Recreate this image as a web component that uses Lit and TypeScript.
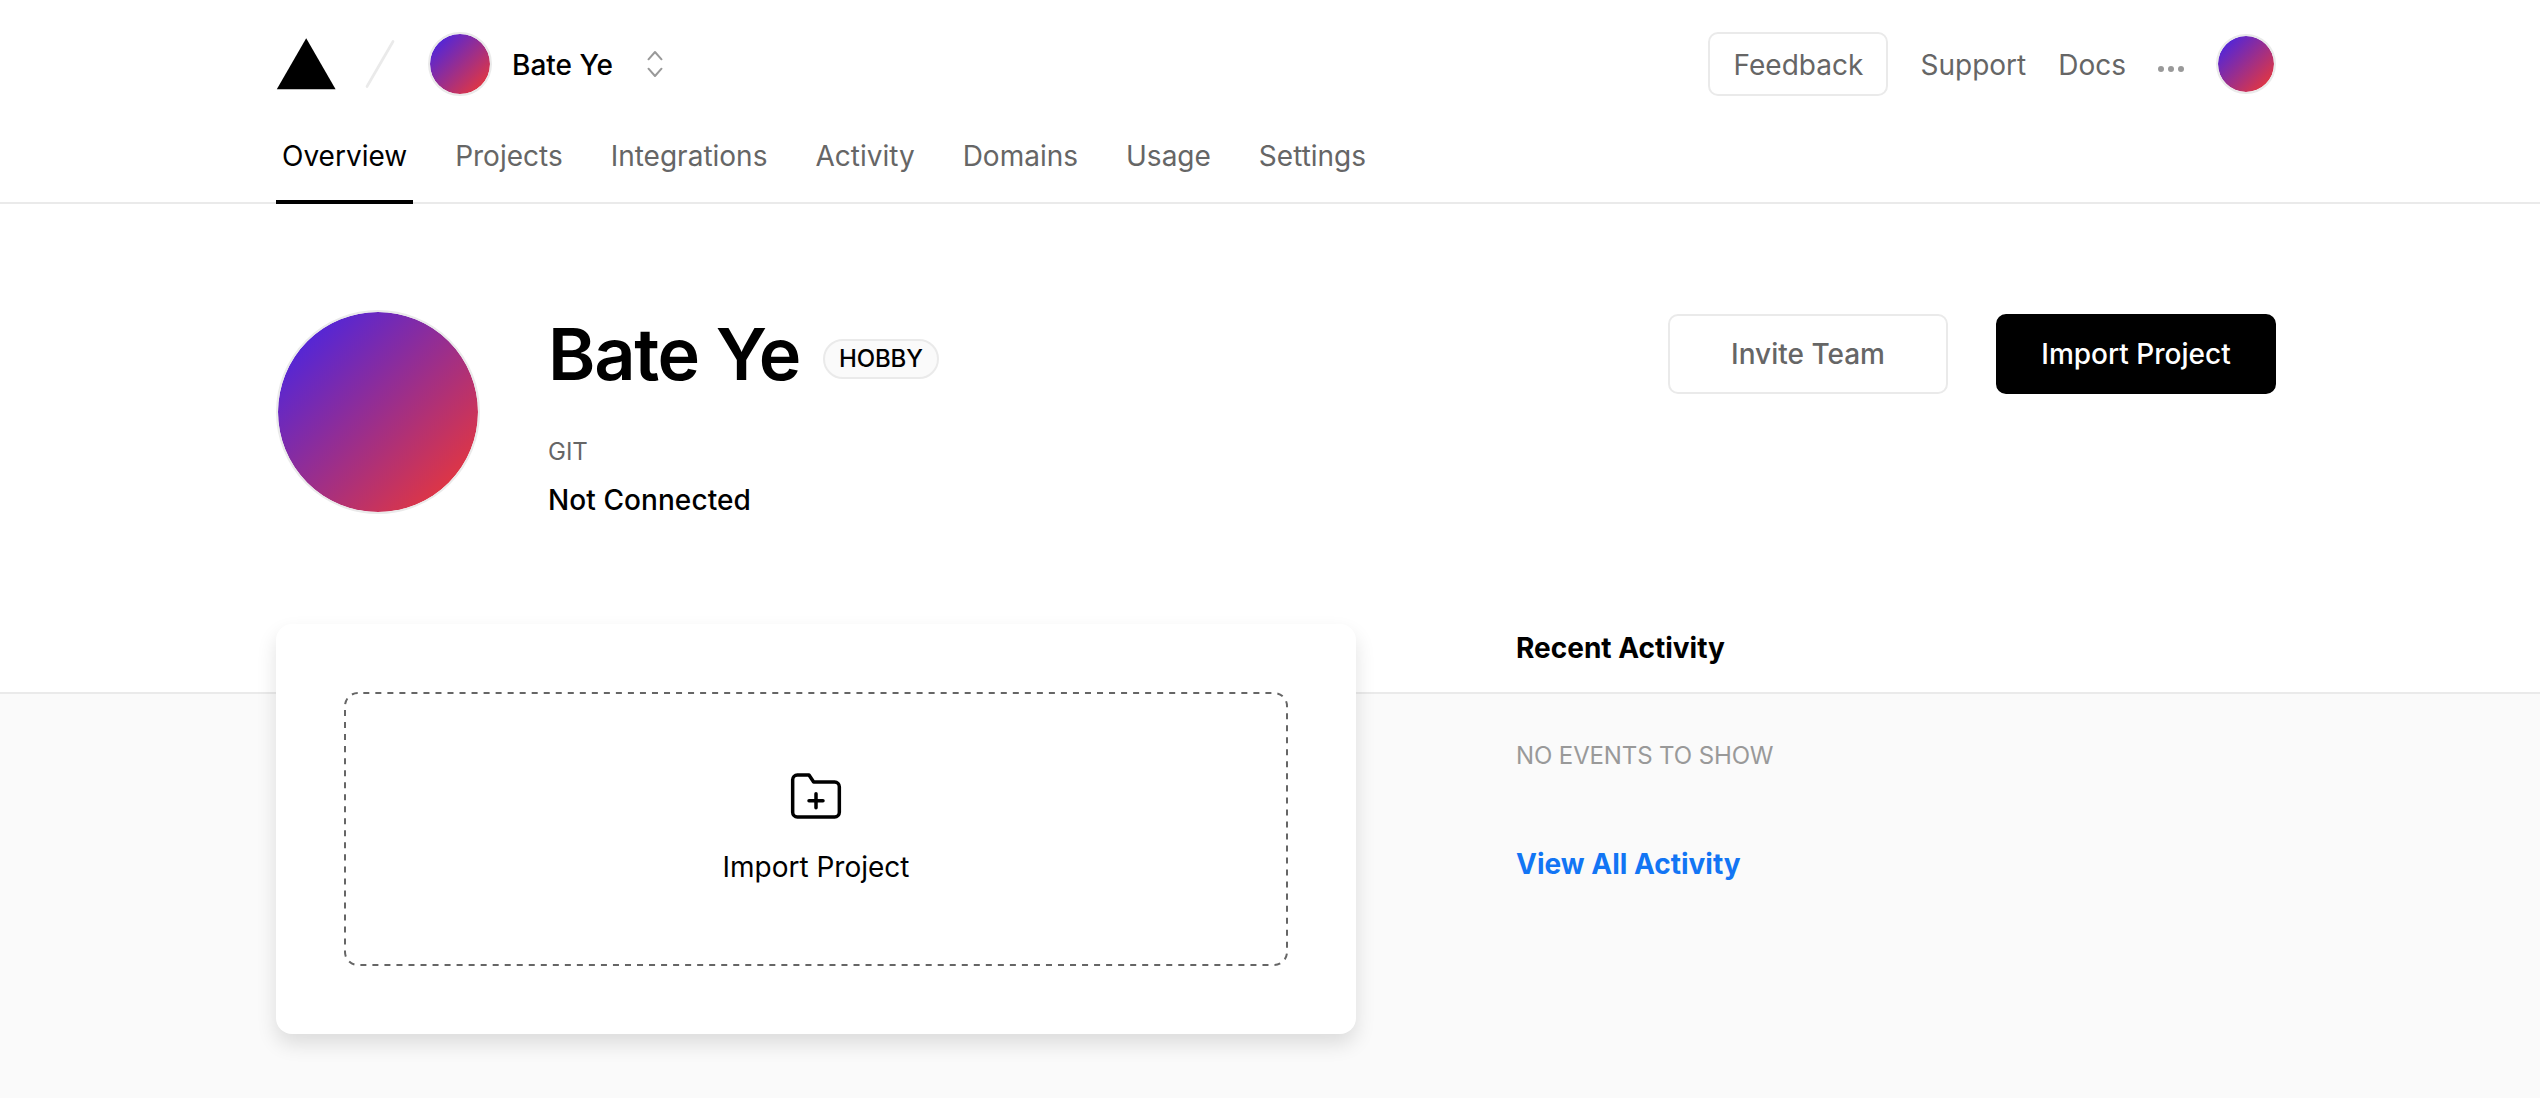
import { LitElement, html, css, svg } from "lit";
import { customElement } from "lit/decorators.js";
import { classMap } from "lit/directives/class-map.js";

const TABS = ["Overview", "Projects", "Integrations", "Activity", "Domains", "Usage", "Settings"];

const logo = svg`<svg class="logo" width="60" height="52" viewBox="0 0 60 52"><path d="M30.2 0.3L59.6 51.3H0.8z" fill="#000"/></svg>`;
const slash = svg`<svg class="slash" width="64" height="64" viewBox="0 0 24 24"><path d="M16.88 3.549L7.12 20.451" fill="none" stroke="#eaeaea" stroke-width="1" stroke-linecap="round"/></svg>`;
const selector = svg`<svg class="selector" width="16" height="28" viewBox="0 0 16 28" fill="none" stroke="#999" stroke-width="2" stroke-linecap="round" stroke-linejoin="round"><path d="M1.5 9.3L8 2L14.5 9.3M1.5 18.7L8 26L14.5 18.7"/></svg>`;
const dots = svg`<svg class="dots" width="26" height="6" viewBox="0 0 26 6" fill="#999"><circle cx="3" cy="3" r="3"/><circle cx="13" cy="3" r="3"/><circle cx="23" cy="3" r="3"/></svg>`;
const folderPlus = svg`<svg class="folder" width="56" height="56" viewBox="0 0 24 24" fill="none" stroke="#000" stroke-width="1.5" stroke-linecap="round" stroke-linejoin="round"><path d="M22 19a2 2 0 0 1-2 2H4a2 2 0 0 1-2-2V5a2 2 0 0 1 2-2h5l2 3h9a2 2 0 0 1 2 2z"/><path d="M12 11v6M9 14h6"/></svg>`;
const dashes = svg`<svg class="dashes" viewBox="0 0 944 274" fill="none" stroke="#666" stroke-width="2"><rect x="1" y="1" width="942" height="272" rx="13" stroke-dasharray="6.014" stroke-dashoffset="-5.3"/></svg>`;

@customElement("app-root")
export class AppRoot extends LitElement {
  static styles = css`
    :host {
      display: block;
      font-family: Inter, "Liberation Sans", sans-serif;
      font-size: 28px;
      line-height: 40px;
      color: #000;
      background: #fff;
    }
    * { box-sizing: border-box; }
    svg { display: block; flex: none; }
    .wrap { width: 2000px; margin-left: 276px; }
    .page { height: 1098px; display: flex; flex-direction: column; overflow: hidden; }

    header { height: 204px; box-shadow: inset 0 -2px #eaeaea; }
    .top { height: 128px; display: flex; align-items: center; }
    .logo { margin: 0 12px 0 0; }
    .avatar {
      flex: none;
      border-radius: 50%;
      border: 2px solid #eaeaea;
      background: linear-gradient(135deg, #3a23f2, #f8392a);
      background-clip: padding-box;
    }
    .sm { width: 64px; height: 64px; margin-left: 16px; }
    .xs { width: 60px; height: 60px; }
    .lg { width: 204px; height: 204px; }
    .who { margin-left: 20px; padding-top: 2px; font-weight: 500; }
    .selector { margin-left: 34px; }
    .menu { margin-left: auto; display: flex; align-items: center; gap: 32px; color: #666; }
    .menu span, .feedback { padding-top: 2px; }
    .dots { margin-top: 10px; }
    .btn {
      display: flex;
      align-items: center;
      justify-content: center;
      border: 2px solid #eaeaea;
      border-radius: 10px;
      color: #666;
      background: #fff;
    }
    .feedback { width: 180px; height: 64px; }
    .big { width: 280px; height: 80px; font-weight: 500; }
    .dark { background: #000; border-color: #000; color: #fff; }

    .tabs { display: flex; gap: 36px; height: 76px; }
    .tab { padding: 8px 6px 0; color: #666; border-bottom: 4px solid transparent; }
    .tab.active { color: #000; border-bottom-color: #000; }

    .profile { height: 490px; flex: none; border-bottom: 2px solid #eaeaea; }
    .profile .wrap { display: flex; align-items: flex-start; padding-top: 106px; }
    .info { margin-left: 68px; }
    .title { display: flex; align-items: center; gap: 23px; height: 88px; }
    h1 { margin: 0; font-size: 72px; line-height: 88px; font-weight: 600; letter-spacing: -1.3px; }
    .badge {
      height: 40px;
      margin-top: 10px;
      padding: 0 14px;
      border: 2px solid #eaeaea;
      border-radius: 20px;
      background: #fafafa;
      font-size: 24px;
      line-height: 36px;
      font-weight: 500;
      letter-spacing: -0.15px;
    }
    .label { margin-top: 34px; font-size: 24px; color: #666; }
    .value { margin-top: 8px; font-weight: 500; letter-spacing: 0.08px; }
    .actions { margin: 4px 0 0 auto; display: flex; gap: 48px; }

    main { flex: 1; background: #fafafa; }
    main .wrap { display: flex; gap: 160px; align-items: flex-start; }
    .card {
      width: 1080px;
      height: 410px;
      margin-top: -70px;
      padding: 68px;
      display: flex;
      border-radius: 16px;
      background: #fff;
      box-shadow: 0 10px 20px rgba(0, 0, 0, 0.12);
    }
    .drop {
      position: relative;
      flex: 1;
      display: flex;
      flex-direction: column;
      align-items: center;
      padding-top: 76px;
    }
    .dashes { position: absolute; inset: 0; width: 100%; height: 100%; }
    .drop span { margin-top: 23px; }
    aside { margin-top: -66px; }
    h2 { margin: 0; font-size: 28px; line-height: 40px; font-weight: 700; }
    .empty { margin-top: 68px; font-size: 24px; color: #999; letter-spacing: -0.12px; }
    .all { margin-top: 68px; font-weight: 700; color: #1275f4; }
  `;

  render() {
    return html`
      <div class="page">
        <header>
          <div class="wrap">
            <div class="top">
              ${logo}${slash}
              <div class="avatar sm"></div>
              <span class="who">Bate Ye</span>
              ${selector}
              <nav class="menu">
                <div class="btn feedback">Feedback</div>
                <span>Support</span>
                <span>Docs</span>
                ${dots}
                <div class="avatar xs"></div>
              </nav>
            </div>
            <nav class="tabs">
              ${TABS.map((t, i) => html`<div class=${classMap({ tab: true, active: i === 0 })}>${t}</div>`)}
            </nav>
          </div>
        </header>
        <section class="profile">
          <div class="wrap">
            <div class="avatar lg"></div>
            <div class="info">
              <div class="title"><h1>Bate Ye</h1><span class="badge">HOBBY</span></div>
              <div class="label">GIT</div>
              <div class="value">Not Connected</div>
            </div>
            <div class="actions">
              <div class="btn big">Invite Team</div>
              <div class="btn big dark">Import Project</div>
            </div>
          </div>
        </section>
        <main>
          <div class="wrap">
            <div class="card">
              <div class="drop">${dashes}${folderPlus}<span>Import Project</span></div>
            </div>
            <aside>
              <h2>Recent Activity</h2>
              <div class="empty">NO EVENTS TO SHOW</div>
              <div class="all">View All Activity</div>
            </aside>
          </div>
        </main>
      </div>
    `;
  }
}
